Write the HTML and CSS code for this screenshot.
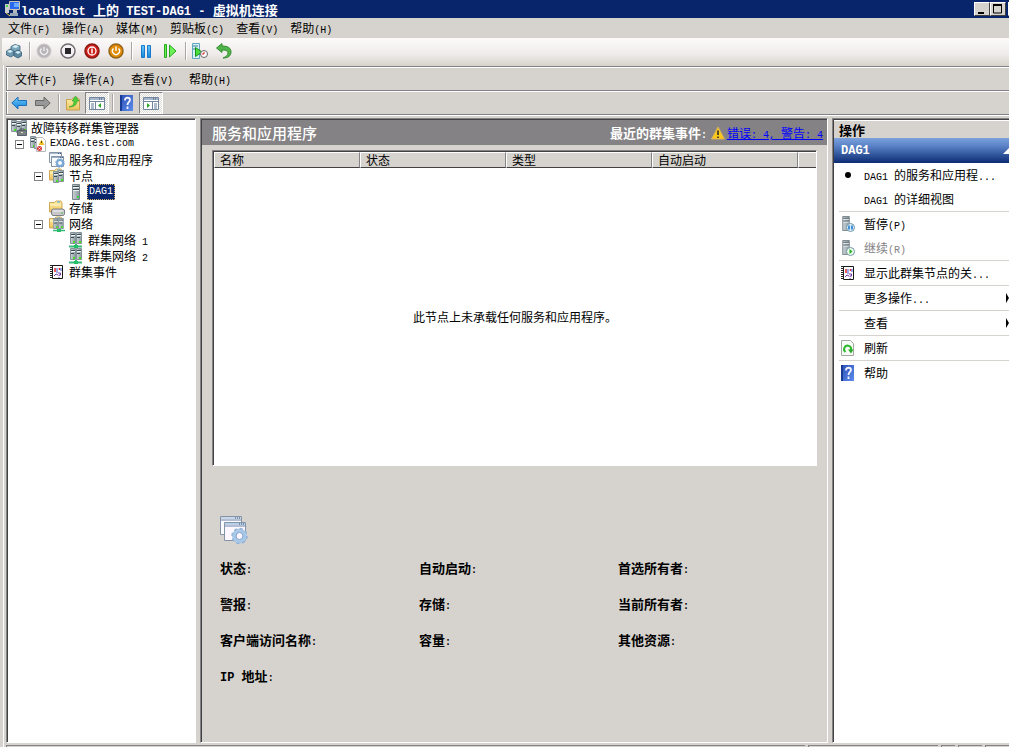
FILE: index.html
```
<!DOCTYPE html>
<html lang="zh-CN">
<head>
<meta charset="utf-8">
<title>localhost 上的 TEST-DAG1 - 虚拟机连接</title>
<link rel="stylesheet" href="styles.css">
</head>
<body>
<svg class="defs" aria-hidden="true">
  <defs>
    <linearGradient id="tower" x1="0" x2="1" y1="0" y2="0"><stop offset="0" stop-color="#ccd4d8"/><stop offset="1" stop-color="#88969c"/></linearGradient>
    <linearGradient id="blue" x1="0" x2="0" y1="0" y2="1"><stop offset="0" stop-color="#6cc8f8"/><stop offset="1" stop-color="#1484dc"/></linearGradient>
    <linearGradient id="book" x1="0" x2="1" y1="0" y2="1"><stop offset="0" stop-color="#2c50b4"/><stop offset="1" stop-color="#5c8cec"/></linearGradient>
    <linearGradient id="yellow" x1="0" x2="0" y1="0" y2="1"><stop offset="0" stop-color="#fff0a8"/><stop offset="1" stop-color="#ecc25c"/></linearGradient>
    <symbol id="server" viewBox="0 0 8 16"><path d="M.5.5h7v15h-7z" fill="url(#tower)" stroke="#78868c"/><path d="M1 2.500h6M1 5.500h6" stroke="#3c4c54"/><path d="M1 3.500h6M1 6.500h6" stroke="#eef2f4"/><path d="M5 12h2v2H5z" fill="#38d848"/></symbol>
    <symbol id="tower-small" viewBox="0 0 6 12"><path d="M.5.500h5v11h-5z" fill="url(#tower)" stroke="#84929a"/><path d="M1 2.500h4M1 5.500h3" stroke="#3c4c54"/><path d="M1 3.500h4" stroke="#f4f6f8"/><path d="M3 9h2v2H3z" fill="#48e020"/></symbol>
    <symbol id="windows" viewBox="0 0 28 28"><path d="M.5.5h21v18H.5z" fill="#fbfbff" stroke="#8494a8"/><path d="M1 1h20v2H1z" fill="#c8d8e8"/><path d="M1 4h20" stroke="#6c84a4"/><path d="M4.500 6.500h21v18h-21z" fill="#fdf8ff" stroke="#8494a8"/><path d="M5 7h20v2H5z" fill="#b8d0e8"/><path d="M5 10h20" stroke="#6c84a4"/><path d="M15 2h1m1 0h1m1 0h1M19 8h1m1 0h1m1 0h1" stroke="#344c74"/><circle cx="19.500" cy="20" r="5.500" fill="none" stroke="#a8c8e8" stroke-width="4"/><circle cx="19.500" cy="20" r="7.500" fill="none" stroke="#92b0d4" stroke-width="1.500" stroke-dasharray="3 2.890"/><circle cx="19.500" cy="20" r="3.500" fill="#fdf6ff" stroke="#7ca0c8"/></symbol>
    <symbol id="windows-small" viewBox="0 0 16 16"><path d="M.5.500h12v10H.5z" fill="#f4f8fc" stroke="#8494a8"/><path d="M1 1.500h11" stroke="#a8b8c8"/><path d="M2.500 4.500h12v10h-12z" fill="#f8fafc" stroke="#8494a8"/><path d="M3 5.500h11" stroke="#a0b0c4"/><path d="M9 1.500h1m1 0h1M11 5.500h1m1 0h1" stroke="#445c7c"/><circle cx="11" cy="11" r="3" fill="#f8fcff" stroke="#78a8d4" stroke-width="2"/><circle cx="11" cy="11" r="4.300" fill="none" stroke="#80a8d0" stroke-dasharray="2 1.370"/></symbol>
    <symbol id="folder" viewBox="0 0 16 16"><path d="M.5 12V2.500h5L7 1h5l1 2v9z" fill="url(#yellow)" stroke="#d0a858"/><path d="M8 2h3" stroke="#4ca4e8"/><path d="M1 5h11" stroke="#fff8d0"/></symbol>
    <symbol id="journal" viewBox="0 0 16 16"><path d="M3.500 1.500h10v13h-10z" fill="#fff" stroke="#181818"/><path d="M2.500 1v14" stroke="#222" stroke-width="3" stroke-dasharray="1 1"/><path d="M6 4v4M10.500 4v2" stroke="#e02828" stroke-width="1.500"/><path d="M8 4v5M12 4v3" stroke="#3858d8"/><path d="M5 12l2-2 2 1M9 9h2.500v2H10v1M10 13v1" fill="none" stroke="#7038a8"/></symbol>
    <symbol id="help" viewBox="0 0 16 16"><path d="M1 0h13v16H1z" fill="url(#book)"/><path d="M1 0h2v16H1z" fill="#183c94"/><path d="M6 5.500V5c0-3 5-3 5 0 0 2-2.500 2-2.500 5M8.500 11.500V14" fill="none" stroke="#f4f4ff" stroke-width="1.800"/></symbol>
    <symbol id="net" viewBox="0 0 16 16"><use href="#tower-small" x="2" y="0" width="6" height="12"/><use href="#tower-small" x="8" y="0" width="6" height="12"/><path d="M8 12v2M1 14.500h13" stroke="#38b878" stroke-width="2"/><path d="M6 13h4v3H6z" fill="#24c068"/></symbol>
    <symbol id="pane" viewBox="0 0 16 16"><path d="M.5 2.500h15v12H.5z" fill="#fff" stroke="#74869c"/><path d="M1 4h14" stroke="#a8b8cc" stroke-width="2"/><path d="M.5 6.500h15" stroke="#74869c"/><path d="M10 4h1m1 0h1" stroke="#34506c"/></symbol>
  </defs>
</svg>

<div class="window">
  <header class="titlebar">
    <svg class="icon" viewBox="0 0 16 16"><path d="M0 3h4v9H0z" fill="#c8ccd0"/><path d="M1 4h2v2H1z" fill="#48d848"/><path d="M4.500.5h10v8h-10z" fill="#2868f0" stroke="#c8c4b0"/><path d="M9 2h5v4H9z" fill="#68a8ff"/><path d="M8 9h4v3H8z" fill="#b0b8c0"/><path d="M5 12h8v3H5z" fill="#98a8b8"/><path d="M1 12l4 3" stroke="#e8d040"/></svg>
    <h1><span class="mono">localhost </span>上的<span class="mono"> TEST-DAG1 - </span>虚拟机连接</h1>
    <div class="captions">
      <button class="caption" aria-label="最小化"><svg viewBox="0 0 12 10"><path d="M2 8h6v2H2z"/></svg></button>
      <button class="caption" aria-label="最大化"><svg viewBox="0 0 12 10"><path d="M1.500 1h8v8h-8z" fill="none" stroke="#000"/><path d="M1 0h9v2H1z"/></svg></button>
      <button class="caption close" aria-label="关闭"></button>
    </div>
  </header>

  <nav class="menubar outer-menu">
    <button>文件<span class="mono">(F)</span></button><button>操作<span class="mono">(A)</span></button><button>媒体<span class="mono">(M)</span></button><button>剪贴板<span class="mono">(C)</span></button><button>查看<span class="mono">(V)</span></button><button>帮助<span class="mono">(H)</span></button>
  </nav>

  <div class="toolbar outer-tools">
    <button aria-label="Ctrl+Alt+Del"><svg class="icon" viewBox="0 0 16 16"><g stroke="#3c6078" stroke-width=".8"><path d="M5 3.500l4-2 5 1.500v4.500L9 9 5 7z" fill="#7ca8bc"/><path d="M.5 8L4 6l4 2v4l-3 2-4.500-2z" fill="#6c98b0"/><path d="M8 9l4-2 3.500 2v4L12 15l-4-2z" fill="#5c88a0"/></g><path d="M6 4l3-2 4 1-3 2zM1 8l3-1 3 1-3 2zM9 9l3-1 3 1-3 2z" fill="#d8f0f8"/></svg></button>
    <i class="sep"></i>
    <button aria-label="启动" disabled><svg class="icon" viewBox="0 0 16 16"><circle cx="8" cy="8" r="7" fill="#b8b4b8" stroke="#ccc8cc"/><path d="M5.500 5.500a3.500 3.500 0 1 0 5 0M8 4v4" fill="none" stroke="#eee" stroke-width="1.400"/></svg></button>
    <button aria-label="强行关闭"><svg class="icon" viewBox="0 0 16 16"><circle cx="8" cy="8" r="7" fill="#f4f2f4" stroke="#706c70" stroke-width="1.500"/><path d="M5 5h6v6H5z" fill="#282828"/></svg></button>
    <button aria-label="关机"><svg class="icon" viewBox="0 0 16 16"><circle cx="8" cy="8" r="7" fill="#cc2018" stroke="#8c1814" stroke-width="1.500"/><circle cx="8" cy="8" r="4" fill="none" stroke="#fff" stroke-width="1.300"/><path d="M8 5.500v5" stroke="#fff" stroke-width="1.500"/></svg></button>
    <button aria-label="保存"><svg class="icon" viewBox="0 0 16 16"><circle cx="8" cy="8" r="7" fill="#e08c08" stroke="#94641c" stroke-width="1.500"/><path d="M5.500 5.500a3.500 3.500 0 1 0 5 0M8 3.500V8" fill="none" stroke="#fff" stroke-width="1.400"/></svg></button>
    <i class="sep"></i>
    <button aria-label="暂停"><svg class="icon" viewBox="0 0 16 16"><path d="M3.500 2.500h3v12h-3zM9.500 2.500h3v12h-3z" fill="url(#blue)" stroke="#1878cc"/></svg></button>
    <button aria-label="重置"><svg class="icon" viewBox="0 0 16 16"><path d="M2.500 1.500h2v13h-2zM7.500 2v12L14 8z" fill="#6cf058" stroke="#28a820"/></svg></button>
    <i class="sep"></i>
    <button aria-label="快照"><svg class="icon" viewBox="0 0 16 16"><path d="M.5.500h7v15h-7z" fill="#d8f0f8" stroke="#60a8c0"/><path d="M1 3h5M1 6h2" stroke="#388098"/><path d="M3.500 4.500v9L10 9z" fill="#48e040" stroke="#18901c"/><circle cx="12" cy="11" r="3.500" fill="#fff" stroke="#686468"/><path d="M12 9v2h-2" fill="none" stroke="#d02020"/></svg></button>
    <button aria-label="还原"><svg class="icon" viewBox="0 0 16 16"><path d="M.5 5L6 .5V3c6 0 9 2 9 6s-3 6-8 6c3-1 5-3 5-5s-2-3-6-3v2.500z" fill="#50b448" stroke="#388c34"/></svg></button>
  </div>

  <div class="guest">
    <nav class="menubar inner-menu">
      <button>文件<span class="mono">(F)</span></button><button>操作<span class="mono">(A)</span></button><button>查看<span class="mono">(V)</span></button><button>帮助<span class="mono">(H)</span></button>
    </nav>
    <div class="toolbar inner-tools">
      <button aria-label="后退"><svg class="icon" viewBox="0 0 16 16"><path d="M.8 8L7 2v3.500h8.500v5H7V14z" fill="url(#blue)" stroke="#1c70b8"/></svg></button>
      <button aria-label="前进"><svg class="icon" viewBox="0 0 16 16"><path d="M15.200 8L9 2v3.500H.5v5H9V14z" fill="#989898" stroke="#686868"/></svg></button>
      <i class="sep"></i>
      <button aria-label="向上"><svg class="icon" viewBox="0 0 16 16"><path d="M1.500 15V4.500h5L8 3h5l1.500 2v10z" fill="url(#yellow)" stroke="#c8a050"/><path d="M4 12c4-1 5-3 5-6H7l3.500-5L14 6h-2c0 4-3 6-8 6z" fill="#50d038" stroke="#34982c" stroke-width=".6"/></svg></button>
      <button class="pressed" aria-label="显示/隐藏控制台树" aria-pressed="true"><svg class="icon" viewBox="0 0 16 16"><use href="#pane"/><path d="M6.500 7v7" stroke="#74869c"/><path d="M2 9h3M2 11h3M2 13h3" stroke="#60789c"/><path d="M12 8v5l-3-2.500z" fill="#28a828"/></svg></button>
      <i class="sep"></i>
      <button aria-label="帮助"><svg class="icon"><use href="#help"/></svg></button>
      <button class="pressed" aria-label="显示/隐藏操作窗格" aria-pressed="true"><svg class="icon" viewBox="0 0 16 16"><use href="#pane"/><path d="M9.500 7v7" stroke="#74869c"/><path d="M11 9h3M11 11h3M11 13h3" stroke="#60789c"/><path d="M4 8v5l3-2.500z" fill="#28a828"/></svg></button>
    </div>

    <main class="panes">
      <ul class="tree pane-box">
        <li><button><svg class="icon" viewBox="0 0 16 16"><use href="#tower-small" x="0" y="0" width="6" height="12"/><use href="#tower-small" x="5" y="1" width="6" height="12"/><use href="#tower-small" x="10" y="0" width="6" height="12"/><path d="M6.500 10.500h9v5h-9z" fill="#788088" stroke="#586068"/><path d="M9 10V9h4v1" fill="none" stroke="#485058"/><path d="M10 12h2v1h-2z" fill="#f0e8a0"/></svg><span>故障转移群集管理器</span></button></li>
        <li class="l1"><i class="expander"></i><button><svg class="icon" viewBox="0 0 16 16"><use href="#tower-small" x="0" y="0" width="6" height="12"/><use href="#tower-small" x="4" y="1" width="6" height="12"/><path d="M6.500 1.500h6l3 3v11h-9z" fill="#fff" stroke="#b8b8b8"/><path d="M11.500 3.500L14.500 9h-6z" fill="#f0c020"/><path d="M11.500 5v2" stroke="#604c00"/><circle cx="9.500" cy="12.500" r="2.500" fill="#d83838"/><path d="M8.500 11.500l2 2m0-2l-2 2" stroke="#fff" stroke-width=".8"/></svg><span class="mono">EXDAG.test.com</span></button></li>
        <li class="l2"><i></i><button><svg class="icon"><use href="#windows-small"/></svg><span>服务和应用程序</span></button></li>
        <li class="l2"><i class="expander"></i><button><svg class="icon" viewBox="0 0 16 16"><use href="#folder"/><use href="#tower-small" x="4" y="3" width="6" height="12"/><use href="#tower-small" x="9" y="2" width="6" height="12"/></svg><span>节点</span></button></li>
        <li class="l3"><button class="selected"><svg class="icon" viewBox="0 0 16 16"><use href="#server" x="4" y="0" width="8" height="16"/></svg><span class="mono">DAG1</span></button></li>
        <li class="l2"><i></i><button><svg class="icon" viewBox="0 0 16 16"><use href="#folder"/><path d="M2.500 10l2-1h9l2 1v4l-1 1.500h-11l-1-1.500z" fill="#c8c8cc" stroke="#808084"/><path d="M4 11h10" stroke="#f4f4f4"/><path d="M12 13h2" stroke="#38c838"/></svg><span>存储</span></button></li>
        <li class="l2"><i class="expander"></i><button><svg class="icon" viewBox="0 0 16 16"><use href="#folder"/><use href="#tower-small" x="4" y="2" width="6" height="11"/><use href="#tower-small" x="9" y="2" width="6" height="11"/><path d="M4 14.500h12" stroke="#38b878" stroke-width="1.500"/><path d="M8 13h4v3H8z" fill="#24c068"/></svg><span>网络</span></button></li>
        <li class="l3"><button><svg class="icon"><use href="#net"/></svg><span>群集网络<span class="mono"> 1</span></span></button></li>
        <li class="l3"><button><svg class="icon"><use href="#net"/></svg><span>群集网络<span class="mono"> 2</span></span></button></li>
        <li class="l2"><i></i><button><svg class="icon"><use href="#journal"/></svg><span>群集事件</span></button></li>
      </ul>

      <section class="content">
        <header class="content-head">
          <h2>服务和应用程序</h2>
          <p class="events"><b>最近的群集事件<span class="mono">:</span></b>
            <svg class="warn" viewBox="0 0 14 14"><path d="M7 1l6.500 12H.5z" fill="#fcc818" stroke="#d8b060"/><path d="M7 4.500v4.500M7 10.500V12" stroke="#202020" stroke-width="1.500"/></svg>
            <a href="#events">错误<span class="mono">: 4, </span>警告<span class="mono">: 4</span></a></p>
        </header>
        <div class="content-body">
          <div class="list">
            <table>
              <thead><tr><th>名称</th><th>状态</th><th>类型</th><th>自动启动</th><th class="rest"></th></tr></thead>
            </table>
            <p class="empty">此节点上未承载任何服务和应用程序。</p>
          </div>
          <div class="details">
            <svg class="big-icon"><use href="#windows"/></svg>
            <dl>
              <dt>状态<span class="mono">:</span></dt><dt>自动启动<span class="mono">:</span></dt><dt>首选所有者<span class="mono">:</span></dt>
              <dt>警报<span class="mono">:</span></dt><dt>存储<span class="mono">:</span></dt><dt>当前所有者<span class="mono">:</span></dt>
              <dt>客户端访问名称<span class="mono">:</span></dt><dt>容量<span class="mono">:</span></dt><dt>其他资源<span class="mono">:</span></dt>
              <dt><span class="mono latin">IP </span>地址<span class="mono">:</span></dt>
            </dl>
          </div>
        </div>
      </section>

      <aside class="actions">
        <h2>操作</h2>
        <h3><span class="mono">DAG1</span><svg viewBox="0 0 6 6"><path d="M6 0v6H0z" fill="#fff"/></svg></h3>
        <ul>
          <li><button><span class="slot"><i class="bullet"></i></span><span><span class="mono">DAG1 </span>的服务和应用程<span class="mono">...</span></span></button></li>
          <li><button><span class="slot"></span><span><span class="mono">DAG1 </span>的详细视图</span></button></li>
        </ul>
        <ul>
          <li><button><span class="slot"><svg class="icon" viewBox="0 0 16 16"><use href="#server" x="2" y="0" width="8" height="15"/><circle cx="10.500" cy="11.500" r="4" fill="#d8f0fc" stroke="#7898a8"/><path d="M9 9.500v4M12 9.500v4" stroke="#1870c8" stroke-width="1.500"/></svg></span><span>暂停<span class="mono">(P)</span></span></button></li>
          <li><button disabled><span class="slot"><svg class="icon" viewBox="0 0 16 16"><use href="#server" x="2" y="0" width="8" height="15"/><circle cx="10.500" cy="11.500" r="4" fill="#ecfcec" stroke="#7898a8"/><path d="M9.500 9v5l3-2.500z" fill="#20b020"/></svg></span><span>继续<span class="mono">(R)</span></span></button></li>
        </ul>
        <ul><li><button><span class="slot"><svg class="icon"><use href="#journal"/></svg></span><span>显示此群集节点的关<span class="mono">...</span></span></button></li></ul>
        <ul><li><button><span class="slot"></span><span>更多操作<span class="mono">...</span></span><i class="more"></i></button></li></ul>
        <ul><li><button><span class="slot"></span><span>查看</span><i class="more"></i></button></li></ul>
        <ul><li><button><span class="slot"><svg class="icon" viewBox="0 0 16 16"><path d="M1.500.5h9l3 3v12h-12z" fill="#f8fcf8" stroke="#a0a8a0"/><path d="M5.500 12A3.500 3.500 0 1 1 11 10" fill="none" stroke="#30b830" stroke-width="2"/><path d="M8 9.500h5.500L11 13.500z" fill="#28a828"/></svg></span><span>刷新</span></button></li></ul>
        <ul><li><button><span class="slot"><svg class="icon"><use href="#help"/></svg></span><span>帮助</span></button></li></ul>
      </aside>
    </main>
    <footer class="statusbar"><i class="wide"></i><i class="mid"></i><i class="small"></i><i></i><i></i></footer>
  </div>
</div>
</body>
</html>
```
FILE: styles.css
```
* { box-sizing: border-box; }
:root { --face: #d6d3ce; --dark: #424142; --shade: #848284; --navy: #08246b; }
body { margin: 0; background: var(--face); color: #000; font: 12px/16px "Noto Sans CJK SC", sans-serif; }
h1, h2, h3, p, ul, dl { margin: 0; padding: 0; font-size: 12px; font-weight: normal; }
ul { list-style: none; }
button { margin: 0; padding: 0; border: 0; background: none; color: inherit; font: inherit; text-align: left; white-space: nowrap; }
i { display: block; flex: none; }
.mono { font-family: "Liberation Mono", monospace; font-size: 10px; line-height: 1; white-space: pre; }
.defs { position: absolute; width: 0; height: 0; }
.icon { display: block; flex: none; width: 16px; height: 16px; }

.window { display: flex; flex-direction: column; height: 100vh; overflow: hidden; }
.titlebar { display: flex; align-items: center; flex: none; height: 18px; padding-left: 5px; background: var(--navy); color: #fff; }
.titlebar h1 { padding-top: 2px; font-size: 13px; line-height: 18px; font-weight: bold; white-space: nowrap; }
.titlebar .mono { font-size: 12px; }
.captions { display: flex; width: 35px; margin-left: auto; overflow: hidden; }
.caption { display: flex; flex: none; width: 16px; height: 14px; padding: 1px; background: var(--face); border: 1px solid; border-color: #fff var(--dark) var(--dark) #fff; }
.caption svg { width: 12px; height: 10px; }
.close { margin-left: 2px; }

.menubar { display: flex; flex: none; align-items: center; }
.outer-menu { height: 20px; padding: 0 0 1px 8px; gap: 12px; }
.toolbar { display: flex; flex: none; align-items: center; }
.toolbar button { display: flex; align-items: center; justify-content: center; width: 24px; height: 22px; }
.outer-tools { height: 27px; margin-left: 2px; padding-bottom: 1px; background: linear-gradient(#fdfafa, #eeebea 60%, #dad6ce); }
.sep { width: 6px; height: 18px; border-left: 3px solid transparent; background: linear-gradient(90deg, #a8a5a2 1px, #fff 1px 2px, transparent 2px) padding-box; }
.toolbar .pressed { border: 1px solid; border-color: var(--shade) #fff #fff var(--shade); background: repeating-conic-gradient(#fff 0 25%, #dedbd6 0 50%) 0 0 / 2px 2px; }

.guest { display: flex; flex: 1; flex-direction: column; min-height: 0; margin-left: 3px; padding: 1px 0 0 2px; border-left: 1px solid #fff; }
.inner-menu, .inner-tools { height: 24px; border-top: 1px solid var(--shade); box-shadow: inset 0 1px #fff, inset 1px 0 var(--shade), inset 2px 0 #fff; }
.inner-menu { padding: 0 0 0 9px; gap: 16px; }
.inner-tools { padding: 1px 0 0 1px; }
.panes { display: flex; flex: 1; gap: 4px; min-height: 0; padding-top: 3px; border-top: 1px solid var(--shade); box-shadow: inset 0 1px #fff; }
.pane-box, .content, .actions { border: 1px solid; border-color: var(--shade) #fff #fff var(--shade); box-shadow: inset 1px 1px var(--dark); }

.tree { flex: none; width: 190px; padding: 1px 0 0 4px; background: #fff; }
.tree li { display: flex; align-items: center; height: 16px; }
.tree li > i { width: 9px; height: 9px; margin-right: 6px; }
.tree button { display: flex; align-items: center; gap: 4px; height: 16px; }
.tree .l1 { padding-left: 4px; }
.tree .l2 { padding-left: 23px; }
.tree .l3 { padding-left: 57px; }
.expander { border: 1px solid var(--shade); background: linear-gradient(#000, #000) center / 5px 1px no-repeat; }
.tree .selected { gap: 3px; }
.selected .mono { padding: 0 2px; background: var(--navy); color: #fff; line-height: 16px; outline: 1px dotted #d8b868; outline-offset: -1px; }

.content { display: flex; flex: 1; flex-direction: column; min-width: 0; padding: 1px 0 0 1px; }
.content-head { display: flex; flex: none; align-items: center; justify-content: space-between; height: 25px; padding: 0 4px 0 10px; background: var(--shade); color: #fff; }
.content-head h2 { font-size: 15px; font-weight: 500; }
.events { display: flex; align-items: center; white-space: nowrap; }
.events b { font-size: 13px; }
.warn { width: 14px; height: 14px; margin: 0 2px 0 4px; }
.events a { color: #00f; }
.content-body { display: flex; flex: 1; flex-direction: column; min-height: 0; padding: 5px 10px 0 10px; }
.list { display: flex; flex: 1; flex-direction: column; min-height: 0; background: #fff; border: 1px solid; border-color: var(--shade) #fff #fff var(--shade); box-shadow: inset 1px 1px var(--dark); padding: 1px 0 0 1px; }
table { width: 100%; table-layout: fixed; border-collapse: separate; border-spacing: 0; }
th { width: 146px; height: 16px; padding: 0 0 0 5px; background: var(--face); border: 1px solid; border-color: #fff var(--shade) var(--dark) #fff; font-weight: normal; line-height: 14px; text-align: left; }
.rest { width: auto; border-right: 0; }
.empty { margin: auto; }
.details { flex: none; height: 276px; padding: 50px 0 0 8px; }
.big-icon { display: block; width: 28px; height: 28px; margin-bottom: 6px; }
dl { display: grid; grid-template-columns: repeat(3, 1fr); grid-auto-rows: 36px; }
dt { font-size: 13px; font-weight: bold; line-height: 36px; white-space: nowrap; }
dt .latin { font-size: 12px; }

.actions { flex: none; width: 177px; padding: 2px 0 0 1px; border-right: 0; background: #fff; overflow: hidden; }
.actions h2 { height: 17px; padding-left: 5px; background: var(--face); font-size: 13px; font-weight: bold; line-height: 17px; }
.actions h3 { display: flex; align-items: center; justify-content: space-between; height: 25px; padding-left: 7px; background: linear-gradient(#7ba2dc, #5c84c8 30%, #0c2c74); color: #fff; font-weight: bold; }
.actions h3 .mono { font-size: 12px; font-weight: bold; }
.actions h3 svg { width: 6px; height: 6px; }
.actions ul { margin-left: 5px; }
.actions ul + ul { border-top: 1px solid var(--face); }
.actions li button { display: flex; align-items: center; width: 100%; height: 24px; }
.actions button:disabled { color: var(--shade); }
.slot { display: flex; flex: none; justify-content: center; width: 18px; margin-right: 7px; }
.bullet { width: 6px; height: 6px; border-radius: 50%; background: #000; }
.more { margin-left: auto; border: solid transparent; border-width: 5px 0 5px 3px; border-left-color: #000; }

.statusbar { display: flex; flex: none; gap: 3px; height: 4px; padding-top: 2px; }
.statusbar i { width: 24px; border-top: 1px solid var(--shade); border-left: 1px solid var(--shade); }
.statusbar .wide { flex: 1; }
.statusbar .mid { width: 130px; }
.statusbar .small { width: 14px; }
```
